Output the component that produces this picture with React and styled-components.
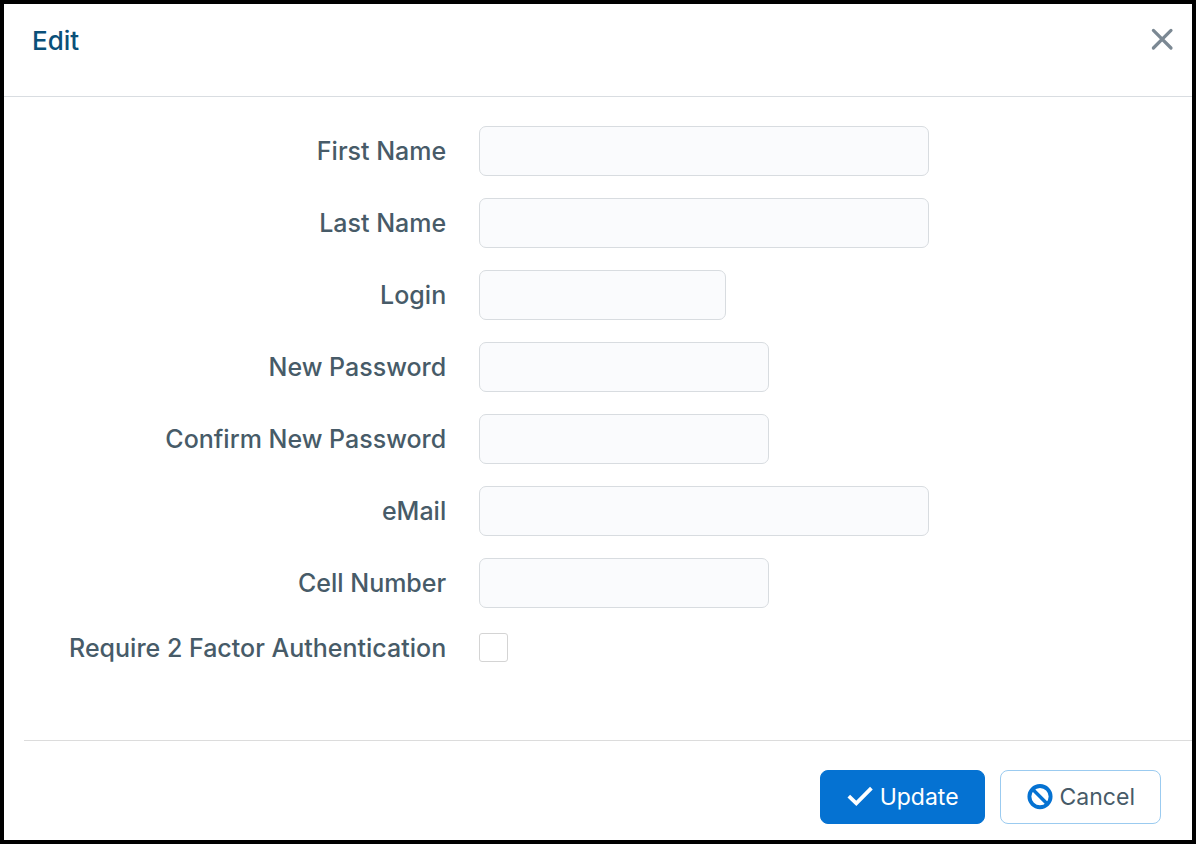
import React from 'react';
import styled, { createGlobalStyle } from 'styled-components';

const fields = [
  { id: 'firstName', label: 'First Name', type: 'text', size: 'large' },
  { id: 'lastName', label: 'Last Name', type: 'text', size: 'large' },
  { id: 'login', label: 'Login', type: 'text', size: 'small' },
  { id: 'newPassword', label: 'New Password', type: 'password', size: 'medium' },
  { id: 'confirmPassword', label: 'Confirm New Password', type: 'password', size: 'medium' },
  { id: 'email', label: 'eMail', type: 'email', size: 'large' },
  { id: 'cellNumber', label: 'Cell Number', type: 'tel', size: 'medium' }
];

const inputWidths = {
  small: '247px',
  medium: '290px',
  large: '450px'
};

const CloseIcon = () => (
  <svg width="24" height="24" viewBox="0 0 24 24" fill="none" aria-hidden="true">
    <path d="M3.4 3.4L21 21M21 3.4L3.4 21" stroke="currentColor" strokeWidth="3.2" strokeLinecap="round" />
  </svg>
);

const CheckIcon = () => (
  <svg width="26" height="26" viewBox="0 0 26 26" fill="none" aria-hidden="true">
    <path d="M1.8 12.2L9.3 19.4L24.4 4.2" stroke="currentColor" strokeWidth="3.8" />
  </svg>
);

const BanIcon = () => (
  <svg width="26" height="26" viewBox="0 0 26 26" fill="none" aria-hidden="true">
    <circle cx="13" cy="12.6" r="10.6" stroke="currentColor" strokeWidth="3.9" />
    <path d="M5.4 5L20.6 20.2" stroke="currentColor" strokeWidth="3.4" />
  </svg>
);

export default function App() {
  const handleSubmit = (event) => {
    event.preventDefault();
  };

  return (
    <>
      <GlobalStyle />
      <Dialog role="dialog" aria-labelledby="dialogTitle">
        <Header>
          <Title id="dialogTitle">Edit</Title>
          <CloseButton type="button" aria-label="Close">
            <CloseIcon />
          </CloseButton>
        </Header>
        <form onSubmit={handleSubmit}>
          <Fields>
            {fields.map(field => (
              <Row key={field.id}>
                <Label htmlFor={field.id}>{field.label}</Label>
                <TextInput id={field.id} type={field.type} $size={field.size} />
              </Row>
            ))}
            <CheckRow>
              <Label htmlFor="twoFactor">Require 2 Factor Authentication</Label>
              <Checkbox id="twoFactor" type="checkbox" />
            </CheckRow>
          </Fields>
          <Footer>
            <Button type="submit" $primary>
              <CheckIcon />
              Update
            </Button>
            <Button type="button">
              <BanIcon />
              Cancel
            </Button>
          </Footer>
        </form>
      </Dialog>
    </>
  );
}

const GlobalStyle = createGlobalStyle`
  * {
    box-sizing: border-box;
  }
  body {
    margin: 0;
    background: #fff;
    font-family: Inter, "Liberation Sans", sans-serif;
  }
  input, button {
    font-family: inherit;
  }
`;

const Dialog = styled.div`
  border: 4px solid #000;
  background: #fff;
`;

const Header = styled.header`
  display: flex;
  align-items: flex-start;
  justify-content: space-between;
  padding: 20px 18px 39px 28px;
  border-bottom: 1px solid #d9dde1;
`;

const Title = styled.h1`
  margin: 0;
  color: #0a5079;
  font-size: 26px;
  font-weight: 500;
  line-height: 33px;
`;

const CloseButton = styled.button`
  display: flex;
  padding: 3px 0;
  border: none;
  background: none;
  color: #7b8893;
  cursor: pointer;
`;

const Fields = styled.div`
  display: flex;
  flex-direction: column;
  gap: 22px;
  padding: 29px 0 75px;
`;

const Row = styled.div`
  display: grid;
  grid-template-columns: 2fr 3fr;
  align-items: center;
`;

const CheckRow = styled(Row)`
  height: 35px;
`;

const Label = styled.label`
  padding-right: 33px;
  color: #475b68;
  font-size: 25px;
  font-weight: 500;
  line-height: 32px;
  text-align: right;
`;

const TextInput = styled.input`
  width: ${props => inputWidths[props.$size]};
  max-width: 100%;
  height: 50px;
  padding: 0 14px;
  border: 1px solid #d8dce0;
  border-radius: 7px;
  background: #fafbfd;
  color: #475b68;
  font-size: 25px;
`;

const Checkbox = styled.input`
  appearance: none;
  width: 29px;
  height: 29px;
  margin: 0;
  border: 1px solid #d4d4d4;
  border-radius: 3px;
  background: #fff;

  &:checked {
    background: #0572d2;
  }
`;

const Footer = styled.footer`
  display: flex;
  justify-content: flex-end;
  gap: 15px;
  margin-left: 20px;
  padding: 29px 31px 16px 0;
  border-top: 1px solid #dcdcdc;
`;

const Button = styled.button`
  display: flex;
  align-items: center;
  gap: 7px;
  height: 54px;
  padding: 0 25px 0 26px;
  border: 1px solid ${props => (props.$primary ? '#0572d2' : '#9bcbf0')};
  border-radius: 8px;
  background: ${props => (props.$primary ? '#0572d2' : '#fff')};
  color: ${props => (props.$primary ? '#fff' : '#475b68')};
  font-size: 23px;
  cursor: pointer;

  svg {
    color: ${props => (props.$primary ? '#fff' : '#0572d2')};
  }
`;
